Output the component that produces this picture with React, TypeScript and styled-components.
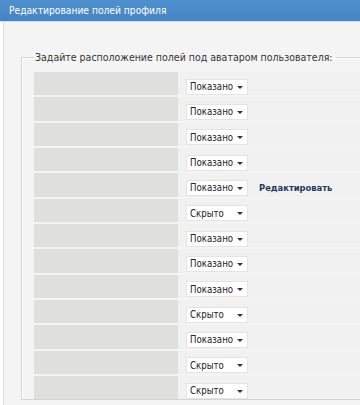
import { createGlobalStyle, styled } from 'styled-components';

const ROWS: { value: string; edit?: boolean }[] = [
  { value: 'Показано' },
  { value: 'Показано' },
  { value: 'Показано' },
  { value: 'Показано' },
  { value: 'Показано', edit: true },
  { value: 'Скрыто' },
  { value: 'Показано' },
  { value: 'Показано' },
  { value: 'Показано' },
  { value: 'Скрыто' },
  { value: 'Показано' },
  { value: 'Скрыто' },
  { value: 'Скрыто' },
];

const GlobalStyle = createGlobalStyle`
  html, body {
    margin: 0;
    padding: 0;
    background: #ffffff;
    font-family: "DejaVu Sans Condensed", "DejaVu Sans", Verdana, sans-serif;
    overflow: hidden;
  }
`;

const App = () => {
  return (
    <S.Page>
      <GlobalStyle />
      <S.Header>Редактирование полей профиля</S.Header>
      <S.Panel>
        <S.Fieldset>
          <S.Legend>Задайте расположение полей под аватаром пользователя:</S.Legend>
          <S.Table>
            {ROWS.map((row, i) => (
              <S.Row key={i}>
                <S.LabelCell />
                <S.ValueCell>
                  <S.Select>
                    {row.value}
                    <S.Arrow />
                  </S.Select>
                  {row.edit && <S.EditLink>Редактировать</S.EditLink>}
                </S.ValueCell>
              </S.Row>
            ))}
          </S.Table>
        </S.Fieldset>
      </S.Panel>
    </S.Page>
  );
};

const S = {
  Page: styled.div`
    width: 360px;
    height: 405px;
    overflow: hidden;
  `,

  Header: styled.div`
    display: flex;
    align-items: center;

    height: 21px;
    padding-left: 9px;
    border-bottom: 1px solid #d6dde6;

    background: linear-gradient(#4f90cf, #4584c4);
    color: #ffffff;
    font-size: 10.2px;
    white-space: nowrap;
  `,

  Panel: styled.div`
    height: 100%;
    margin-left: 3px;
    padding: 29px 0 0 17px;
    border-left: 1px solid #dcdcdc;

    background: #f4f4f4;
  `,

  Fieldset: styled.fieldset`
    margin: 0;
    padding: 9px 0 0 12px;
    border: 1px solid #d4d4d4;
    border-right: none;
    box-shadow: inset 1px 1px 0 #ffffff;
  `,

  Legend: styled.legend`
    padding: 0 3px 0 1px;

    color: #333333;
    font-size: 10.5px;
    white-space: nowrap;
  `,

  Table: styled.div`
    display: flex;
    flex-direction: column;
    gap: 2px;
  `,

  Row: styled.div`
    display: flex;

    height: 23.33px;
  `,

  LabelCell: styled.div`
    width: 144px;

    background: #dfdfde;
  `,

  ValueCell: styled.div`
    display: flex;
    flex: 1;
    align-items: center;
    gap: 11px;

    padding: 6px 0 0 8px;

    background: #f1f1f1;
  `,

  Select: styled.span`
    position: relative;
    display: flex;
    align-items: center;

    box-sizing: border-box;
    width: 62px;
    height: 16px;
    padding-left: 3px;
    border: 1px solid #e4e4e4;

    background: #ffffff;
    color: #222222;
    font-size: 9.6px;
    white-space: nowrap;
  `,

  Arrow: styled.span`
    position: absolute;
    top: 6px;
    right: 4px;

    width: 0;
    height: 0;
    border-top: 3px solid #333333;
    border-right: 3px solid transparent;
    border-left: 3px solid transparent;
  `,

  EditLink: styled.span`
    color: #1f3a5c;
    font-size: 9.3px;
    font-weight: bold;
    white-space: nowrap;
  `,
};

export default App;
